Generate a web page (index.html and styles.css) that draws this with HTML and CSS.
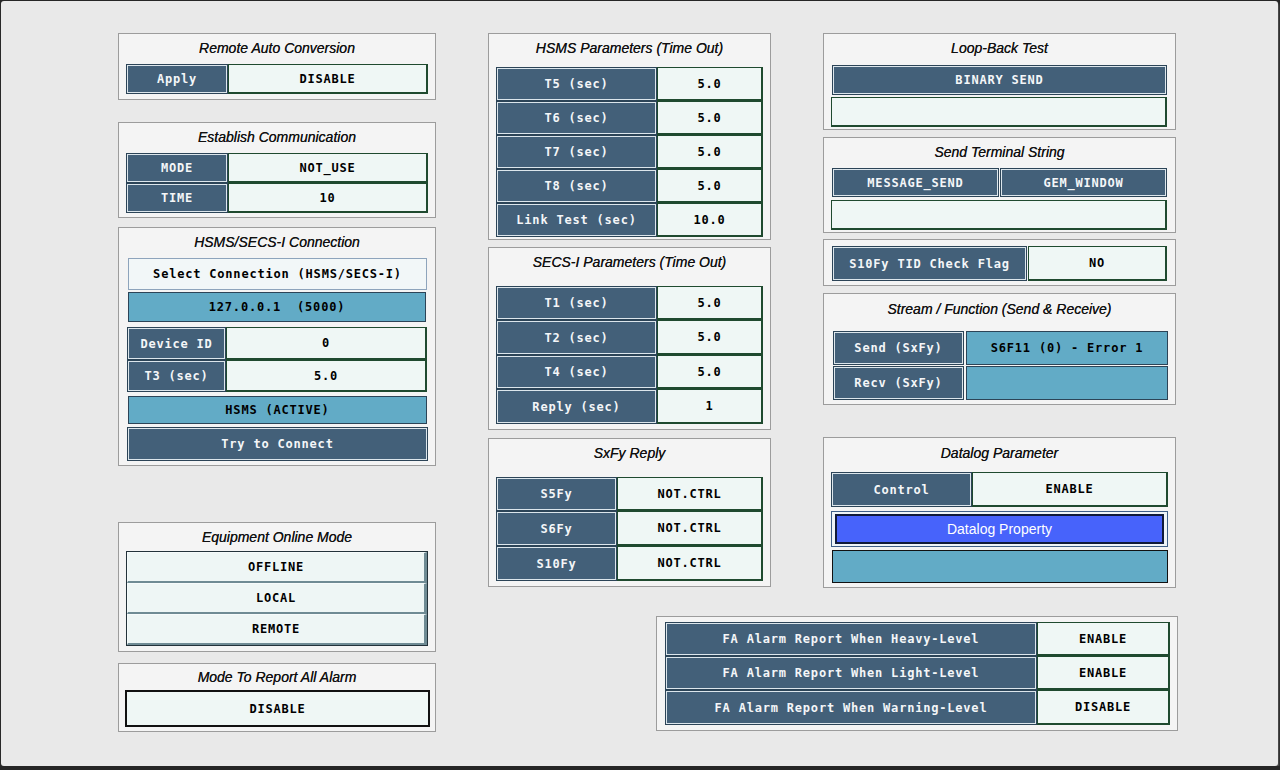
FILE: index.html
```html
<!DOCTYPE html>
<html>
<head>
<meta charset="utf-8">
<link rel="stylesheet" href="styles.css">
</head>
<body>
<div class="screen">
  <div class="col col-left">
    <div class="panel p-rac">
      <div class="ttl t30">Remote Auto Conversion</div>
      <div class="rows pad-rac">
        <div class="row h30"><div class="cell lbl w102">Apply</div><div class="cell val">DISABLE</div></div>
      </div>
    </div>

    <div class="panel p-est">
      <div class="ttl t30">Establish Communication</div>
      <div class="rows pad-rac">
        <div class="row h30"><div class="cell lbl w102">MODE</div><div class="cell val">NOT_USE</div></div>
        <div class="row h30"><div class="cell lbl w102">TIME</div><div class="cell val">10</div></div>
      </div>
    </div>

    <div class="panel p-conn">
      <div class="ttl t30">HSMS/SECS-I Connection</div>
      <div class="rows pad-conn">
        <div class="cell sel h32">Select Connection (HSMS/SECS-I)</div>
        <div class="cell teal h30 mt2 mr1">127.0.0.1&nbsp;&nbsp;(5000)</div>
        <div class="row h33 mt5 ml-1"><div class="cell lbl w99">Device ID</div><div class="cell val">0</div></div>
        <div class="row h32 ml-1"><div class="cell lbl w99">T3 (sec)</div><div class="cell val">5.0</div></div>
        <div class="cell teal h28 mt4">HSMS (ACTIVE)</div>
        <div class="cell lbl big h34 mt3 ml-1 mr-1">Try to Connect</div>
      </div>
    </div>

    <div class="panel p-eq">
      <div class="ttl t28">Equipment Online Mode</div>
      <div class="rows pad-rac">
        <div class="group">
          <div class="cell btn h31">OFFLINE</div>
          <div class="cell btn h31">LOCAL</div>
          <div class="cell btn h31">REMOTE</div>
        </div>
      </div>
    </div>

    <div class="panel p-mode">
      <div class="ttl t26">Mode To Report All Alarm</div>
      <div class="rows pad-mode">
        <div class="cell val blk h37">DISABLE</div>
      </div>
    </div>
  </div>

  <div class="right">
    <div class="right-top">
      <div class="col col-mid">
        <div class="panel p-hsms">
          <div class="ttl t33">HSMS Parameters (Time Out)</div>
          <div class="rows pad-rac">
            <div class="row h34"><div class="cell lbl w161">T5 (sec)</div><div class="cell val">5.0</div></div>
            <div class="row h34"><div class="cell lbl w161">T6 (sec)</div><div class="cell val">5.0</div></div>
            <div class="row h34"><div class="cell lbl w161">T7 (sec)</div><div class="cell val">5.0</div></div>
            <div class="row h34"><div class="cell lbl w161">T8 (sec)</div><div class="cell val">5.0</div></div>
            <div class="row h34"><div class="cell lbl w161">Link Test (sec)</div><div class="cell val">10.0</div></div>
          </div>
        </div>

        <div class="panel p-secs">
          <div class="ttl t38">SECS-I Parameters (Time Out)</div>
          <div class="rows pad-rac">
            <div class="row h34"><div class="cell lbl w161">T1 (sec)</div><div class="cell val">5.0</div></div>
            <div class="row h35"><div class="cell lbl w161">T2 (sec)</div><div class="cell val">5.0</div></div>
            <div class="row h34"><div class="cell lbl w161">T4 (sec)</div><div class="cell val">5.0</div></div>
            <div class="row h35"><div class="cell lbl w161">Reply (sec)</div><div class="cell val">1</div></div>
          </div>
        </div>

        <div class="panel p-sxfy">
          <div class="ttl t38">SxFy Reply</div>
          <div class="rows pad-rac">
            <div class="row h34"><div class="cell lbl w121">S5Fy</div><div class="cell val">NOT.CTRL</div></div>
            <div class="row h35"><div class="cell lbl w121">S6Fy</div><div class="cell val">NOT.CTRL</div></div>
            <div class="row h35"><div class="cell lbl w121">S10Fy</div><div class="cell val">NOT.CTRL</div></div>
          </div>
        </div>
      </div>

      <div class="col col-right">
        <div class="panel p-loop">
          <div class="ttl t31">Loop-Back Test</div>
          <div class="rows pad-r">
            <div class="cell lbl h30">BINARY SEND</div>
            <div class="cell val h30 mt2 ml-1">&nbsp;</div>
          </div>
        </div>

        <div class="panel p-term">
          <div class="ttl t30">Send Terminal String</div>
          <div class="rows pad-r">
            <div class="row h29 gap1"><div class="cell lbl grow">MESSAGE_SEND</div><div class="cell lbl grow">GEM_WINDOW</div></div>
            <div class="cell val h30 mt3 ml-1">&nbsp;</div>
          </div>
        </div>

        <div class="panel p-tid">
          <div class="rows pad-tid">
            <div class="row h35 gap1"><div class="cell lbl w195">S10Fy TID Check Flag</div><div class="cell val">NO</div></div>
          </div>
        </div>

        <div class="panel p-sf">
          <div class="ttl t37">Stream / Function (Send &amp; Receive)</div>
          <div class="rows pad-sf">
            <div class="row h34 gap2"><div class="cell lbl w131">Send (SxFy)</div><div class="cell teal">S6F11 (0) - Error 1</div></div>
            <div class="row h34 gap2 mt1"><div class="cell lbl w131">Recv (SxFy)</div><div class="cell teal">&nbsp;</div></div>
          </div>
        </div>

        <div class="panel p-dl">
          <div class="ttl t34">Datalog Parameter</div>
          <div class="rows pad-dl">
            <div class="row h35"><div class="cell lbl w141">Control</div><div class="cell val">ENABLE</div></div>
            <div class="prop mt4"><div class="prop-in">Datalog Property</div></div>
            <div class="cell teal dark h33 mt3 ml1">&nbsp;</div>
          </div>
        </div>
      </div>
    </div>

    <div class="panel p-fa">
      <div class="rows pad-fa">
        <div class="row h34"><div class="cell lbl w372">FA Alarm Report When Heavy-Level</div><div class="cell val">ENABLE</div></div>
        <div class="row h34"><div class="cell lbl w372">FA Alarm Report When Light-Level</div><div class="cell val">ENABLE</div></div>
        <div class="row h35"><div class="cell lbl w372">FA Alarm Report When Warning-Level</div><div class="cell val">DISABLE</div></div>
      </div>
    </div>
  </div>
</div>
</body>
</html>
```

FILE: styles.css
```css
html { background: #262626; }
body { margin: 0; }

.screen {
  box-sizing: border-box;
  width: 1277px;
  height: 765px;
  margin: 1px 0 0 1px;
  background: #e9e9e9;
  border-radius: 3px;
  box-shadow: 1px 2px 2px #555;
  padding: 32px 0 0 117px;
  display: flex;
  gap: 52px;
}

.col { display: flex; flex-direction: column; }
.col-left { width: 318px; }
.col-mid { width: 283px; }
.col-right { width: 353px; }
.right { width: 690px; display: flex; flex-direction: column; }
.right-top { display: flex; gap: 52px; height: 555px; }

.panel {
  box-sizing: border-box;
  background: #f4f4f4;
  border: 1px solid #9c9c9c;
}

.ttl {
  font: italic 14px "Liberation Sans", Arial, sans-serif;
  color: #101010;
  text-align: center;
  text-shadow: 0 0 0.6px #333;
}
.t26 { height: 26px; line-height: 26px; }
.t28 { height: 28px; line-height: 28px; }
.t30 { height: 30px; line-height: 28px; }
.t31 { height: 31px; line-height: 28px; }
.t33 { height: 33px; line-height: 28px; }
.t34 { height: 34px; line-height: 30px; }
.t37 { height: 37px; line-height: 30px; }
.t38 { height: 38px; line-height: 28px; }

.rows { display: flex; flex-direction: column; }
.pad-rac { padding: 0 7px; }
.pad-conn { padding: 0 8px 0 9px; }
.pad-mode { padding: 0 5px 0 6px; }
.pad-r { padding: 0 8px 0 8px; }
.pad-tid { padding: 6px 8px 0 8px; }
.pad-sf { padding: 0 7px 0 9px; }
.pad-dl { padding: 0 7px 0 7px; }
.pad-fa { padding: 5px 7px 0 8px; }

.row { display: flex; }
.gap1 { gap: 1px; }
.gap2 { gap: 2px; }

.cell {
  box-sizing: border-box;
  display: flex;
  align-items: center;
  justify-content: center;
  font: bold 12px "DejaVu Sans Mono", monospace;
  letter-spacing: 0.8px;
  white-space: nowrap;
}
.row .cell.val, .row .cell.teal { flex: 1; }
.grow { flex: 1; }

.lbl {
  background: #436079;
  color: #f4f6f8;
  border: 1px solid #2c4457;
  box-shadow: inset 0 0 0 1px #dce6ec;
}
.val {
  background: #eff7f5;
  color: #000;
  border-style: solid;
  border-color: #1f4a2f;
  border-width: 1px 2px 2px 1px;
}
.teal {
  background: #62abc6;
  color: #000;
  border: 1px solid #2c4457;
}
.teal.dark { border-color: #111; }
.sel {
  background: #f2f7f8;
  color: #000;
  border: 1px solid #8ea4bc;
}
.blk { border: 2px solid #111; }

.group { border: 1px solid #23323a; }
.btn {
  background: #eef6f5;
  color: #000;
  border-style: solid;
  border-width: 1px 3px 2px 1px;
  border-color: #f6fbfb #6f8b94 #6f8b94 #f6fbfb;
}

.prop {
  box-sizing: border-box;
  height: 36px;
  border: 1px solid #3f5f88;
  background: #eef4f8;
  padding: 2px 3px 2px 3px;
}
.prop-in {
  box-sizing: border-box;
  height: 100%;
  background: #4763fb;
  border: 2px solid #101a3a;
  color: #fff;
  font: 14px "Liberation Sans", Arial, sans-serif;
  display: flex;
  align-items: center;
  justify-content: center;
}

.w99 { width: 99px; }
.w102 { width: 102px; }
.w121 { width: 121px; }
.w131 { width: 131px; }
.w141 { width: 141px; }
.w161 { width: 161px; }
.w195 { width: 195px; }
.w372 { width: 372px; }

.h28 { height: 28px; }
.h29 { height: 29px; }
.h30 { height: 30px; }
.h31 { height: 31px; }
.h32 { height: 32px; }
.h33 { height: 33px; }
.h34 { height: 34px; }
.h35 { height: 35px; }
.h37 { height: 37px; }

.mt1 { margin-top: 1px; }
.mt2 { margin-top: 2px; }
.mt3 { margin-top: 3px; }
.mt4 { margin-top: 4px; }
.mt5 { margin-top: 5px; }
.mr1 { margin-right: 1px; }
.ml1 { margin-left: 1px; }
.ml-1 { margin-left: -1px; }
.mr-1 { margin-right: -1px; }

/* panel sizes and spacing */
.p-rac { height: 67px; }
.p-est { height: 96px; margin-top: 22px; }
.p-conn { height: 239px; margin-top: 9px; }
.p-eq { height: 130px; margin-top: 56px; }
.p-mode { height: 69px; margin-top: 11px; }

.p-hsms { height: 207px; }
.p-secs { height: 183px; margin-top: 7px; }
.p-sxfy { height: 149px; margin-top: 8px; }

.p-loop { height: 97px; }
.p-term { height: 96px; margin-top: 7px; }
.p-tid { height: 47px; margin-top: 6px; }
.p-sf { height: 112px; margin-top: 7px; }
.p-dl { height: 151px; margin-top: 32px; }

.p-fa { width: 522px; height: 115px; margin-top: 28px; margin-left: auto; }
```
